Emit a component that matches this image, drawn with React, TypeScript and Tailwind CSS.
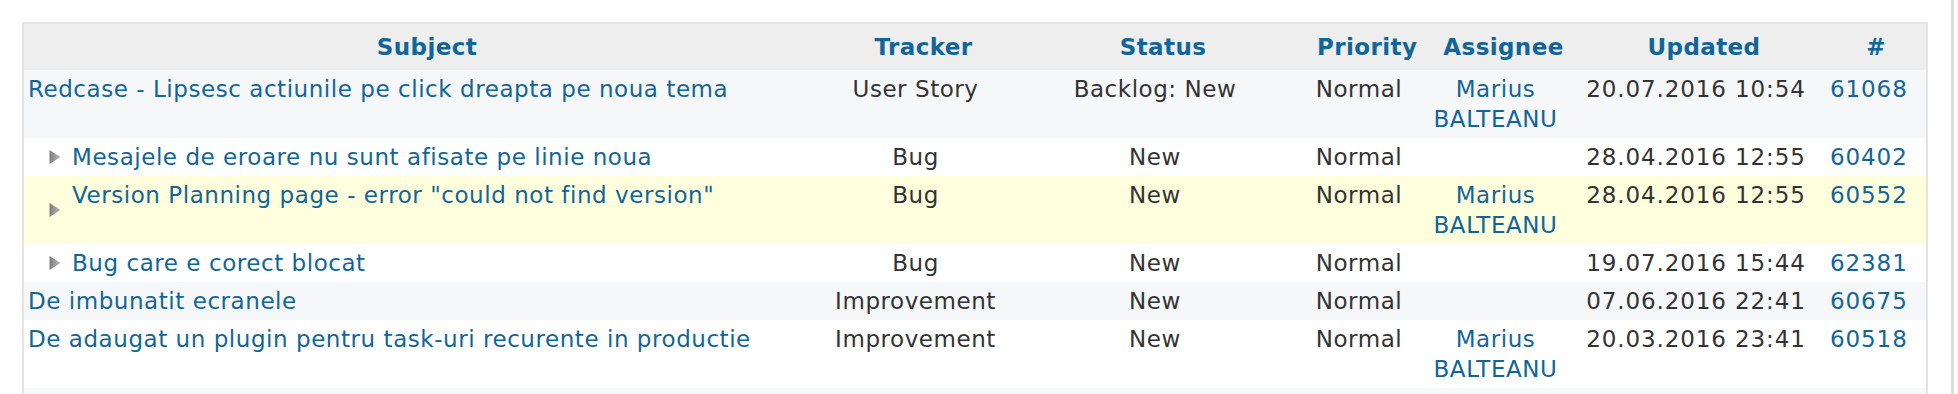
import React from 'react';

type Issue = {
  id: string;
  subject: string;
  tracker: string;
  status: string;
  priority: string;
  assignee?: string;
  updated: string;
  child?: boolean;
  hover?: boolean;
};

const issues: Issue[] = [
  { id: '61068', subject: 'Redcase - Lipsesc actiunile pe click dreapta pe noua tema', tracker: 'User Story', status: 'Backlog: New', priority: 'Normal', assignee: 'Marius BALTEANU', updated: '20.07.2016 10:54' },
  { id: '60402', subject: 'Mesajele de eroare nu sunt afisate pe linie noua', tracker: 'Bug', status: 'New', priority: 'Normal', updated: '28.04.2016 12:55', child: true },
  { id: '60552', subject: 'Version Planning page - error "could not find version"', tracker: 'Bug', status: 'New', priority: 'Normal', assignee: 'Marius BALTEANU', updated: '28.04.2016 12:55', child: true, hover: true },
  { id: '62381', subject: 'Bug care e corect blocat', tracker: 'Bug', status: 'New', priority: 'Normal', updated: '19.07.2016 15:44', child: true },
  { id: '60675', subject: 'De imbunatit ecranele', tracker: 'Improvement', status: 'New', priority: 'Normal', updated: '07.06.2016 22:41' },
  { id: '60518', subject: 'De adaugat un plugin pentru task-uri recurente in productie', tracker: 'Improvement', status: 'New', priority: 'Normal', assignee: 'Marius BALTEANU', updated: '20.03.2016 23:41' },
];

const columns = ['Subject', 'Tracker', 'Status', 'Priority', 'Assignee', 'Updated', '#'];
const widths = ['w-[806px]', 'w-[187px]', 'w-[292px]', 'w-[116px]', 'w-[157px]', 'w-[244px]', 'w-[100px]'];

// collapsed-subtask arrow, sits like a background image in the subject cell
const Arrow = () => (
  <svg
    width="12"
    height="15"
    viewBox="0 0 12 15"
    className="absolute left-[25px] top-1/2 -translate-y-1/2"
  >
    <defs>
      <linearGradient id="arrowGrad" x1="0" x2="1" y1="0" y2="0">
        <stop offset="0" stopColor="#7d7d7d" />
        <stop offset="1" stopColor="#b9b9b9" />
      </linearGradient>
    </defs>
    <path d="M0.5 0.5 L11.5 7.5 L0.5 14.5 Z" fill="url(#arrowGrad)" />
  </svg>
);

const cell = 'pt-1 pb-1 pl-1 pr-5 align-top text-center';

export default function App() {
  return (
    <div className="flex h-[394px] overflow-hidden bg-white font-['DejaVu_Sans',sans-serif] text-[23px] leading-[30px] tracking-[0.55px] text-[#333]">
      <div className="w-[1951px] pl-[22px] pt-[22px]">
        <div className="w-[1906px] border-2 border-[#e4e4e4]">
          <table className="table-fixed w-[1902px] border-collapse">
            <colgroup>
              {widths.map((w, i) => (
                <col key={i} className={w} />
              ))}
            </colgroup>
            <thead>
              <tr className="bg-[#eeeeee]">
                {columns.map((c) => (
                  <th key={c} className="py-2 px-2 text-center font-bold tracking-[0.4px] text-[#116699] whitespace-nowrap">
                    {c}
                  </th>
                ))}
              </tr>
            </thead>
            <tbody>
              {issues.map((it, i) => {
                const bg = it.hover ? 'bg-[#ffffdd]' : i % 2 === 0 ? 'bg-[#f6f7f8]' : 'bg-white';
                return (
                  <tr key={it.id} className={bg}>
                    <td className={`relative pt-1 pb-1 pr-5 align-top text-left ${it.child ? 'pl-[48px]' : 'pl-1'}`}>
                      {it.child && <Arrow />}
                      <a className="text-[#116699]">{it.subject}</a>
                    </td>
                    <td className={cell}>{it.tracker}</td>
                    <td className={cell}>{it.status}</td>
                    <td className={cell}>{it.priority}</td>
                    <td className={cell}>
                      {it.assignee && <a className="text-[#116699]">{it.assignee}</a>}
                    </td>
                    <td className={`${cell} tracking-[0.9px] whitespace-nowrap`}>{it.updated}</td>
                    <td className={`${cell} tracking-[0.9px]`}>
                      <a className="text-[#116699]">{it.id}</a>
                    </td>
                  </tr>
                );
              })}
              <tr className="bg-[#f6f7f8]">
                <td className={cell} colSpan={7}>
                  &nbsp;
                </td>
              </tr>
            </tbody>
          </table>
        </div>
      </div>
      <div className="w-[3px] bg-[#dcdcdc]" />
      <div className="flex-1" />
    </div>
  );
}
